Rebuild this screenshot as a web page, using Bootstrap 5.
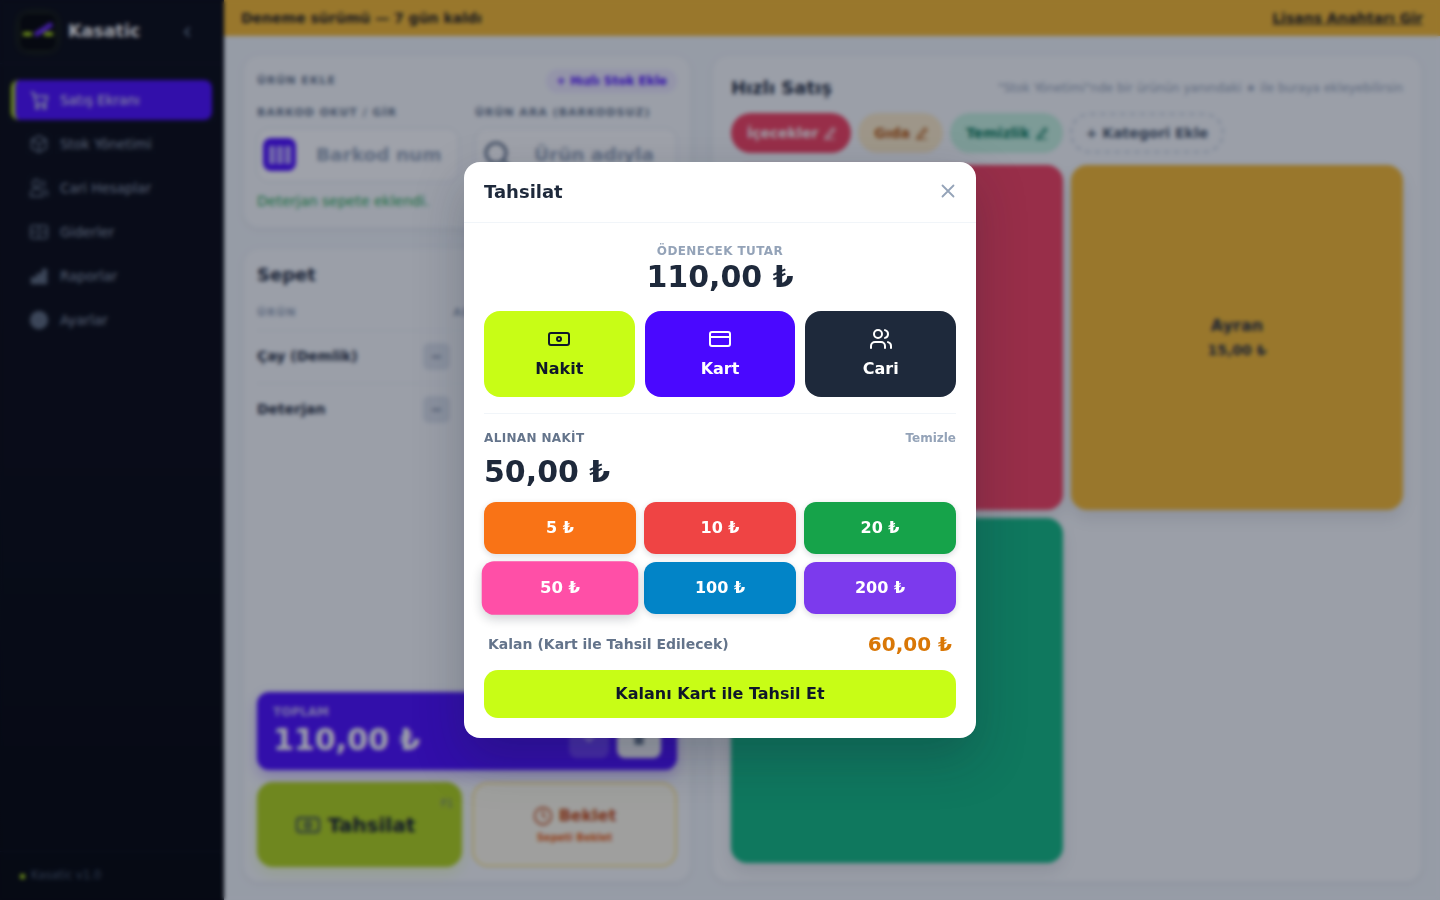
<!DOCTYPE html>
<html lang="tr">
<head>
    <meta charset="UTF-8">
    <meta name="viewport" content="width=device-width, initial-scale=1.0">
    <link href="https://cdn.jsdelivr.net/npm/bootstrap@5.3.0/dist/css/bootstrap.min.css" rel="stylesheet">
    <title>Kasatic</title>
    <style>
        body{
            font-family: "DejaVu Sans", sans-serif;
            background: #f1f5f9;
            height: 900px;
            overflow: hidden;
            color: #1e293b;
        }
        .app-shell{ height: 900px; }
        .side-bar{
            width: 224px;
            background: linear-gradient(180deg, #06070f 0%, #05060e 50%, #000206 100%);
            color: #94a3b8;
            flex-shrink: 0;
        }
        .brand-row{ height: 64px; padding: 0 20px; border-bottom: 1px solid #0c0f1c; }
        .brand-logo{ width: 36px; height: 36px; border-radius: 8px; background: #000; box-shadow: 0 0 8px #c6ff1433; }
        .brand-name{ font-size: 17.5px; font-weight: 700; color: #fff; margin-left: 12px; }
        .side-toggle{ margin-left: auto; margin-right: 10px; line-height: 0; color: #64748b; }
        .side-menu{ padding: 16px 12px; gap: 4px; }
        .side-link{
            height: 40px;
            padding-left: 16px;
            border-radius: 8px;
            font-size: 13.500px;
            color: #8b97ab;
            gap: 10px;
        }
        .side-link svg{ color: #5b6779; }
        .side-link.is-active{
            background: #4a0aff;
            color: #e2e8f0;
            border-left: 4px solid #b4e414;
            margin-left: -1px;
            padding-left: 13px;
        }
        .side-link.is-active svg{ color: #cbd5e1; }
        .side-foot{ height: 49px; margin-top: auto; padding: 0 20px; font-size: 11.5px; color: #475569; border-top: 1px solid #0a0c16; gap: 6px; }
        .foot-dot{ width: 5px; height: 5px; border-radius: 50%; background: #c6ff14; }

        .trial-bar{ height: 36px; background: #f5b82e; padding: 0 17px; font-size: 14px; font-weight: 700; color: #1e1b18; }
        .trial-bar a{ color: #1e1b18; }
        .work-area{ padding: 19px 18px 18px 19px; gap: 21px; min-height: 0; }
        .left-col{ width: 448px; gap: 20px; flex-shrink: 0; }
        .soft-panel{ background: #f8fafc; border: 1px solid #eef2f6; border-radius: 16px; box-shadow: 0 2px 8px #0f172a0d; }
        .scan-panel{ height: 173px; padding: 13px; }
        .mini-head{ font-size: 11px; font-weight: 700; letter-spacing: 1px; color: #64748b; }
        .quick-stock{ background: #ede9fe; color: #4a0aff; font-size: 12px; font-weight: 700; border-radius: 20px; padding: 3px 10px; }
        .scan-col{ width: 202px; min-width: 0; }
        .scan-label{ margin-bottom: 6px; }
        .scan-field{ height: 54px; border: 1px solid #e2e8f0; border-radius: 12px; background: #fff; padding: 0 16px 0 5px; gap: 20px; font-size: 18.500px; font-weight: 700; color: #94a3b8; }
        .scan-text{ overflow: hidden; white-space: nowrap; }
        .scan-icon{ width: 33px; height: 33px; border-radius: 8px; background: #4a0aff; flex-shrink: 0; }
        .added-note{ margin-top: 9px; font-size: 14px; color: #16a34a; }
        .cart-panel{ flex: 1; padding: 12px 13px 14px; min-height: 0; }
        .panel-title{ font-size: 18px; font-weight: 700; }
        .cart-head{ margin: 17px 0 8px; color: #94a3b8; }
        .cart-row{ height: 53px; border-top: 1px solid #eef2f6; font-size: 14px; font-weight: 700; }
        .cart-name{ width: 166px; }
        .cart-col{ width: 196px; }
        .qty-btn{ width: 27px; height: 27px; border-radius: 6px; background: #dde3ec; color: #64748b; }
        .total-box{ height: 78px; background: #4a0aff; border-radius: 12px; padding: 9px 16px 12px; color: #fff; box-shadow: 0 6px 14px #4a0aff44; }
        .total-label{ font-size: 12px; font-weight: 700; color: #c4b5fd; margin-bottom: 1px; }
        .total-value{ font-size: 30px; font-weight: 700; line-height: 1.2; }
        .total-btn{ width: 40px; height: 40px; border-radius: 8px; background: #6d3bff; color: #e9e3ff; }
        .total-btn.is-light{ width: 44px; background: #fff; color: #64748b; }
        .pay-row{ gap: 10px; margin-top: 12px; }
        .pay-big{ height: 85px; width: 205px; border-radius: 16px; position: relative; }
        .pay-lime{ background: #b0d218; font-size: 20px; font-weight: 700; color: #0f172a; gap: 8px; box-shadow: 0 6px 14px #c6ff1433; }
        .pay-f1{ position: absolute; top: 14px; right: 9px; font-size: 10px; font-weight: 400; color: #64748b; }
        .pay-hold{ background: #fffbeb; border: 2px solid #fde68a; color: #c2410c; }
        .hold-main{ font-size: 16px; font-weight: 700; gap: 6px; }
        .hold-sub{ font-size: 10px; font-weight: 700; color: #ea580c; margin-top: 2px; }

        .sale-panel{ flex: 1; padding: 18px; min-width: 0; }
        .sale-top{ margin-bottom: 12px; }
        .sale-hint{ font-size: 12px; color: #94a3b8; }
        .cat-row{ gap: 7px; }
        .cat-pill{ height: 40px; border-radius: 20px; padding: 0 15px 0 16px; font-size: 14px; font-weight: 700; gap: 6px; }
        .cat-add{ border: 2px dashed #cbd5e1; color: #475569; padding: 0 14px; }
        .tile-grid{ display: grid; grid-template-columns: 1fr 1fr; grid-auto-rows: 345px; gap: 8px; margin-top: 12px; }
        .sale-tile{ border-radius: 16px; font-size: 16px; font-weight: 700; box-shadow: 0 8px 16px #0f172a1a; }
        .tile-price{ font-size: 14px; margin-top: 2px; }

        .dim-layer{
            position: fixed;
            inset: 0;
            background: rgba(15, 23, 42, .4);
            backdrop-filter: blur(2px);
        }
        .pay-dialog{ width: 512px; height: 576px; background: #fff; border: 0; border-radius: 16px; box-shadow: 0 20px 50px #0f172a40; }
        .pay-top{ height: 61px; flex-shrink: 0; padding: 0 20px 2px; border-bottom: 1px solid #f1f5f9; }
        .pay-title{ font-size: 18px; font-weight: 700; color: #1e293b; }
        .pay-close{ background: none; border: 0; padding: 0; line-height: 0; }
        .pay-body{ padding: 20px; }
        .due-label{ font-size: 12px; font-weight: 700; letter-spacing: .4px; color: #94a3b8; line-height: 16px; }
        .due-value{ font-size: 30px; font-weight: 700; color: #1e293b; line-height: 34px; margin-bottom: 17px; margin-top: 1px; }
        .method-grid{ display: grid; grid-template-columns: repeat(3, 1fr); gap: 10px; }
        .method-btn{
            height: 86px;
            border: 0;
            border-radius: 16px;
            font-size: 16px;
            font-weight: 700;
            gap: 6px;
        }
        .method-cash{ background: #c8fd16; color: #0f172a; }
        .method-card{ background: #4a08ff; color: #fff; }
        .method-acc{ background: #1e293b; color: #fff; }
        .pay-rule{ height: 1px; background: #f1f5f9; margin: 16px 0 15px; }
        .cash-label{ font-size: 12px; font-weight: 700; letter-spacing: .35px; color: #64748b; }
        .cash-clear{ font-size: 12px; font-weight: 700; color: #94a3b8; }
        .cash-value{ font-size: 30px; font-weight: 700; color: #1e293b; line-height: 40px; margin: 5px 0 10px; }
        .note-grid{ display: grid; grid-template-columns: repeat(3, 1fr); gap: 8px; }
        .note-btn{
            height: 52px;
            border: 0;
            border-radius: 12px;
            color: #fff;
            font-size: 16px;
            font-weight: 700;
            box-shadow: 0 2px 6px #0f172a26;
        }
        .note-hover{ transform: scale(1.03); box-shadow: 0 4px 10px #0f172a33; }
        .left-row{ padding: 0 4px; margin: 15px 0 11px; height: 30px; }
        .left-label{ font-size: 14px; font-weight: 700; color: #64748b; }
        .left-value{ font-size: 20px; font-weight: 700; color: #d97706; }
        .finish-btn{ height: 48px; border: 0; border-radius: 14px; background: #c8fd16; color: #0f172a; font-size: 16px; font-weight: 700; }
    </style>
</head>
<body>
<div class="app-shell d-flex">
    <aside class="side-bar d-flex flex-column">
        <div class="brand-row d-flex align-items-center">
            <div class="brand-logo d-flex align-items-center justify-content-center">
                <svg width="36" height="36" viewBox="0 0 36 36" fill="none"><path d="M3 20h9M24 20h9" stroke="#c6ff14" stroke-width="3.500"/><path d="M15 21 32 10" stroke="#6d28ff" stroke-width="5"/></svg>
            </div>
            <span class="brand-name">Kasatic</span>
            <span class="side-toggle"><svg width="14" height="14" viewBox="0 0 14 14" fill="none" stroke="currentColor" stroke-width="2" stroke-linecap="round" stroke-linejoin="round"><path d="M9 3 5 7l4 4"/></svg></span>
        </div>
        <nav class="side-menu d-flex flex-column" id="menu"></nav>
        <div class="side-foot d-flex align-items-center"><span class="foot-dot"></span>Kasatic v1.0</div>
    </aside>

    <div class="flex-grow-1 d-flex flex-column" style="min-width:0">
        <div class="trial-bar d-flex align-items-center justify-content-between">
            <span>Deneme sürümü — 7 gün kaldı</span>
            <a href="#">Lisans Anahtarı Gir</a>
        </div>
        <div class="work-area flex-grow-1 d-flex">
            <div class="left-col d-flex flex-column">
                <section class="soft-panel scan-panel">
                    <div class="d-flex justify-content-between align-items-center mb-2 pb-1">
                        <span class="mini-head">ÜRÜN EKLE</span>
                        <span class="quick-stock">+ Hızlı Stok Ekle</span>
                    </div>
                    <div class="d-flex gap-3">
                        <div class="scan-col">
                            <div class="mini-head scan-label">BARKOD OKUT / GİR</div>
                            <div class="scan-field d-flex align-items-center">
                                <span class="scan-icon d-flex align-items-center justify-content-center">
                                    <svg width="22" height="18" viewBox="0 0 22 18" fill="#b9a5ff"><rect width="6" height="18"/><rect x="8" width="6" height="18"/><rect x="16" width="6" height="18"/></svg>
                                </span><span class="scan-text">Barkod numarası</span>
                            </div>
                        </div>
                        <div class="scan-col">
                            <div class="mini-head scan-label">ÜRÜN ARA (BARKODSUZ)</div>
                            <div class="scan-field d-flex align-items-center">
                                <svg width="33" height="33" viewBox="0 0 33 33" fill="none" class="flex-shrink-0"><circle cx="15" cy="15" r="10" stroke="#64748b" stroke-width="3"/><path d="m23 23 7 7" stroke="#64748b" stroke-width="3"/></svg><span class="scan-text">Ürün adıyla ara</span>
                            </div>
                        </div>
                    </div>
                    <div class="added-note">Deterjan sepete eklendi.</div>
                </section>

                <section class="soft-panel cart-panel d-flex flex-column">
                    <div class="panel-title">Sepet</div>
                    <div class="d-flex mini-head cart-head"><span class="cart-col">ÜRÜN</span><span>ADET</span></div>
                    <div class="cart-row d-flex align-items-center">
                        <span class="cart-name">Çay (Demlik)</span><span class="qty-btn d-flex align-items-center justify-content-center">−</span>
                    </div>
                    <div class="cart-row d-flex align-items-center">
                        <span class="cart-name">Deterjan</span><span class="qty-btn d-flex align-items-center justify-content-center">−</span>
                    </div>
                    <div class="total-box d-flex justify-content-between align-items-end mt-auto">
                        <div>
                            <div class="total-label">TOPLAM</div>
                            <div class="total-value">110,00 ₺</div>
                        </div>
                        <div class="d-flex gap-2">
                            <span class="total-btn d-flex align-items-center justify-content-center"><svg width="18" height="18" viewBox="0 0 24 24" fill="none" stroke="currentColor" stroke-width="2" stroke-linecap="round" stroke-linejoin="round"><path d="m5 8 7 8 7-8"/></svg></span>
                            <span class="total-btn is-light d-flex align-items-center justify-content-center"><svg width="18" height="18" viewBox="0 0 24 24" fill="currentColor"><path d="M6 7h12v14H6z"/></svg></span>
                        </div>
                    </div>
                    <div class="pay-row d-flex">
                        <div class="pay-big pay-lime d-flex align-items-center justify-content-center">
                            <svg width="24" height="18" viewBox="0 0 24 18" fill="none" stroke="#334155" stroke-width="2"><rect x="1" y="2" width="22" height="14" rx="3"/><circle cx="12" cy="9" r="3"/></svg>
                            Tahsilat<span class="pay-f1">F1</span>
                        </div>
                        <div class="pay-big pay-hold d-flex flex-column align-items-center justify-content-center">
                            <span class="hold-main d-flex align-items-center">
                                <svg width="20" height="20" viewBox="0 0 24 24" fill="none" stroke="currentColor" stroke-width="2" stroke-linecap="round"><circle cx="12" cy="12" r="10"/><path d="M12 6v6l3 2"/></svg>Beklet
                            </span>
                            <span class="hold-sub">Sepeti Beklet</span>
                        </div>
                    </div>
                </section>
            </div>

            <section class="soft-panel sale-panel">
                <div class="sale-top d-flex justify-content-between align-items-center">
                    <span class="panel-title">Hızlı Satış</span>
                    <span class="sale-hint">"Stok Yönetimi"nde bir ürünün yanındaki ★ ile buraya ekleyebilirsin</span>
                </div>
                <div class="d-flex cat-row">
                    <span class="cat-pill d-flex align-items-center" style="background:#f43f5e;color:#fff">İçecekler<svg width="12" height="14" viewBox="0 0 12 14" fill="none" stroke="currentColor" stroke-width="1.200"><path d="m1 13 1-3 7-8 2 2-7 8zM1 13h10"/></svg></span>
                    <span class="cat-pill d-flex align-items-center" style="background:#fdecc8;color:#b45309">Gıda<svg width="12" height="14" viewBox="0 0 12 14" fill="none" stroke="currentColor" stroke-width="1.200"><path d="m1 13 1-3 7-8 2 2-7 8zM1 13h10"/></svg></span>
                    <span class="cat-pill d-flex align-items-center" style="background:#c6f3df;color:#047857">Temizlik<svg width="12" height="14" viewBox="0 0 12 14" fill="none" stroke="currentColor" stroke-width="1.200"><path d="m1 13 1-3 7-8 2 2-7 8zM1 13h10"/></svg></span>
                    <span class="cat-pill cat-add d-flex align-items-center">+ Kategori Ekle</span>
                </div>
                <div class="tile-grid">
                    <div class="sale-tile" style="background:#f43f5e"></div>
                    <div class="sale-tile d-flex flex-column align-items-center justify-content-center" style="background:#f5b82e">Ayran<span class="tile-price">15,00 ₺</span></div>
                    <div class="sale-tile" style="background:#10b981"></div>
                </div>
            </section>
        </div>
    </div>
</div>

<div class="dim-layer d-flex align-items-center justify-content-center">
    <div class="modal-content pay-dialog">
        <div class="pay-top d-flex align-items-center justify-content-between">
            <span class="pay-title">Tahsilat</span>
            <button class="pay-close" type="button" aria-label="Kapat">
                <svg width="16" height="16" viewBox="0 0 16 16" fill="none" stroke="#94a3b8" stroke-width="1.800" stroke-linecap="round"><path d="m2.5 2.5 11 11M13.500 2.500l-11 11"/></svg>
            </button>
        </div>
        <div class="pay-body">
            <div class="text-center">
                <div class="due-label">ÖDENECEK TUTAR</div>
                <div class="due-value">110,00 ₺</div>
            </div>
            <div class="method-grid">
                <button class="method-btn method-cash d-flex flex-column align-items-center justify-content-center" type="button">
                    <svg width="24" height="24" viewBox="0 0 24 24" fill="none" stroke="currentColor" stroke-width="2" stroke-linecap="round" stroke-linejoin="round"><rect x="2" y="6" width="20" height="12" rx="2"/><circle cx="12" cy="12" r="2"/></svg>
                    Nakit
                </button>
                <button class="method-btn method-card d-flex flex-column align-items-center justify-content-center" type="button">
                    <svg width="24" height="24" viewBox="0 0 24 24" fill="none" stroke="currentColor" stroke-width="2" stroke-linecap="round" stroke-linejoin="round"><rect x="2" y="5" width="20" height="14" rx="2"/><path d="M2 10h20"/></svg>
                    Kart
                </button>
                <button class="method-btn method-acc d-flex flex-column align-items-center justify-content-center" type="button">
                    <svg width="24" height="24" viewBox="0 0 24 24" fill="none" stroke="currentColor" stroke-width="2" stroke-linecap="round" stroke-linejoin="round"><path d="M16 21v-2a4 4 0 0 0-4-4H6a4 4 0 0 0-4 4v2"/><circle cx="9" cy="7" r="4"/><path d="M22 21v-2a4 4 0 0 0-3-3.870"/><path d="M16 3.130a4 4 0 0 1 0 7.750"/></svg>
                    Cari
                </button>
            </div>
            <div class="pay-rule"></div>
            <div class="d-flex justify-content-between align-items-center">
                <span class="cash-label">ALINAN NAKİT</span>
                <span class="cash-clear">Temizle</span>
            </div>
            <div class="cash-value">50,00 ₺</div>
            <div class="note-grid" id="notes"></div>
            <div class="left-row d-flex justify-content-between align-items-center">
                <span class="left-label">Kalan (Kart ile Tahsil Edilecek)</span>
                <span class="left-value">60,00 ₺</span>
            </div>
            <button class="finish-btn w-100" type="button">Kalanı Kart ile Tahsil Et</button>
        </div>
    </div>
</div>

<script>
const menuItems = [
    { label: "Satış Ekranı", active: true, icon: '<path d="M3 4h3l3 12h10l2-8H7"/><circle cx="10" cy="20" r="1.500"/><circle cx="18" cy="20" r="1.500"/>' },
    { label: "Stok Yönetimi", icon: '<path d="m12 3 8 4.500v9L12 21l-8-4.500v-9z"/><path d="m4 7.500 8 4.500 8-4.500M12 12v9"/>' },
    { label: "Cari Hesaplar", icon: '<circle cx="9" cy="7" r="4"/><path d="M3 21v-3a5 5 0 0 1 5-5h3a5 5 0 0 1 5 5v3z"/><path d="M16 4a4 4 0 0 1 0 7M21 21v-3a4 4 0 0 0-3-4"/>' },
    { label: "Giderler", icon: '<rect x="3" y="5" width="18" height="14" rx="2"/><path d="M12 5v14M3 12h6M15 12h6"/>' },
    { label: "Raporlar", icon: '<path d="M4 20v-6h4v6zM10 20v-10h4v10zM16 20V5h4v15z" fill="currentColor"/>' },
    { label: "Ayarlar", icon: '<circle cx="12" cy="12" r="9" fill="currentColor"/><circle cx="12" cy="12" r="3"/>' },
];
document.getElementById("menu").innerHTML = menuItems.map(item => `
    <a class="side-link d-flex align-items-center text-decoration-none ${item.active ? "is-active" : ""}" href="#">
        <svg width="22" height="22" viewBox="0 0 24 24" fill="none" stroke="currentColor" stroke-width="2">${item.icon}</svg>
        ${item.label}
    </a>`).join("");

const notes = [
    { text: "5 ₺", color: "#f97316" },
    { text: "10 ₺", color: "#ef4444" },
    { text: "20 ₺", color: "#16a34a" },
    { text: "50 ₺", color: "#ff4fa7", hover: true },
    { text: "100 ₺", color: "#0284c7" },
    { text: "200 ₺", color: "#7c3aed" },
];
document.getElementById("notes").innerHTML = notes.map(n =>
    `<button type="button" class="note-btn ${n.hover ? "note-hover" : ""}" style="background:${n.color}">${n.text}</button>`
).join("");
</script>
<script src="https://cdn.jsdelivr.net/npm/bootstrap@5.3.0/dist/js/bootstrap.bundle.min.js"></script>
</body>
</html>
